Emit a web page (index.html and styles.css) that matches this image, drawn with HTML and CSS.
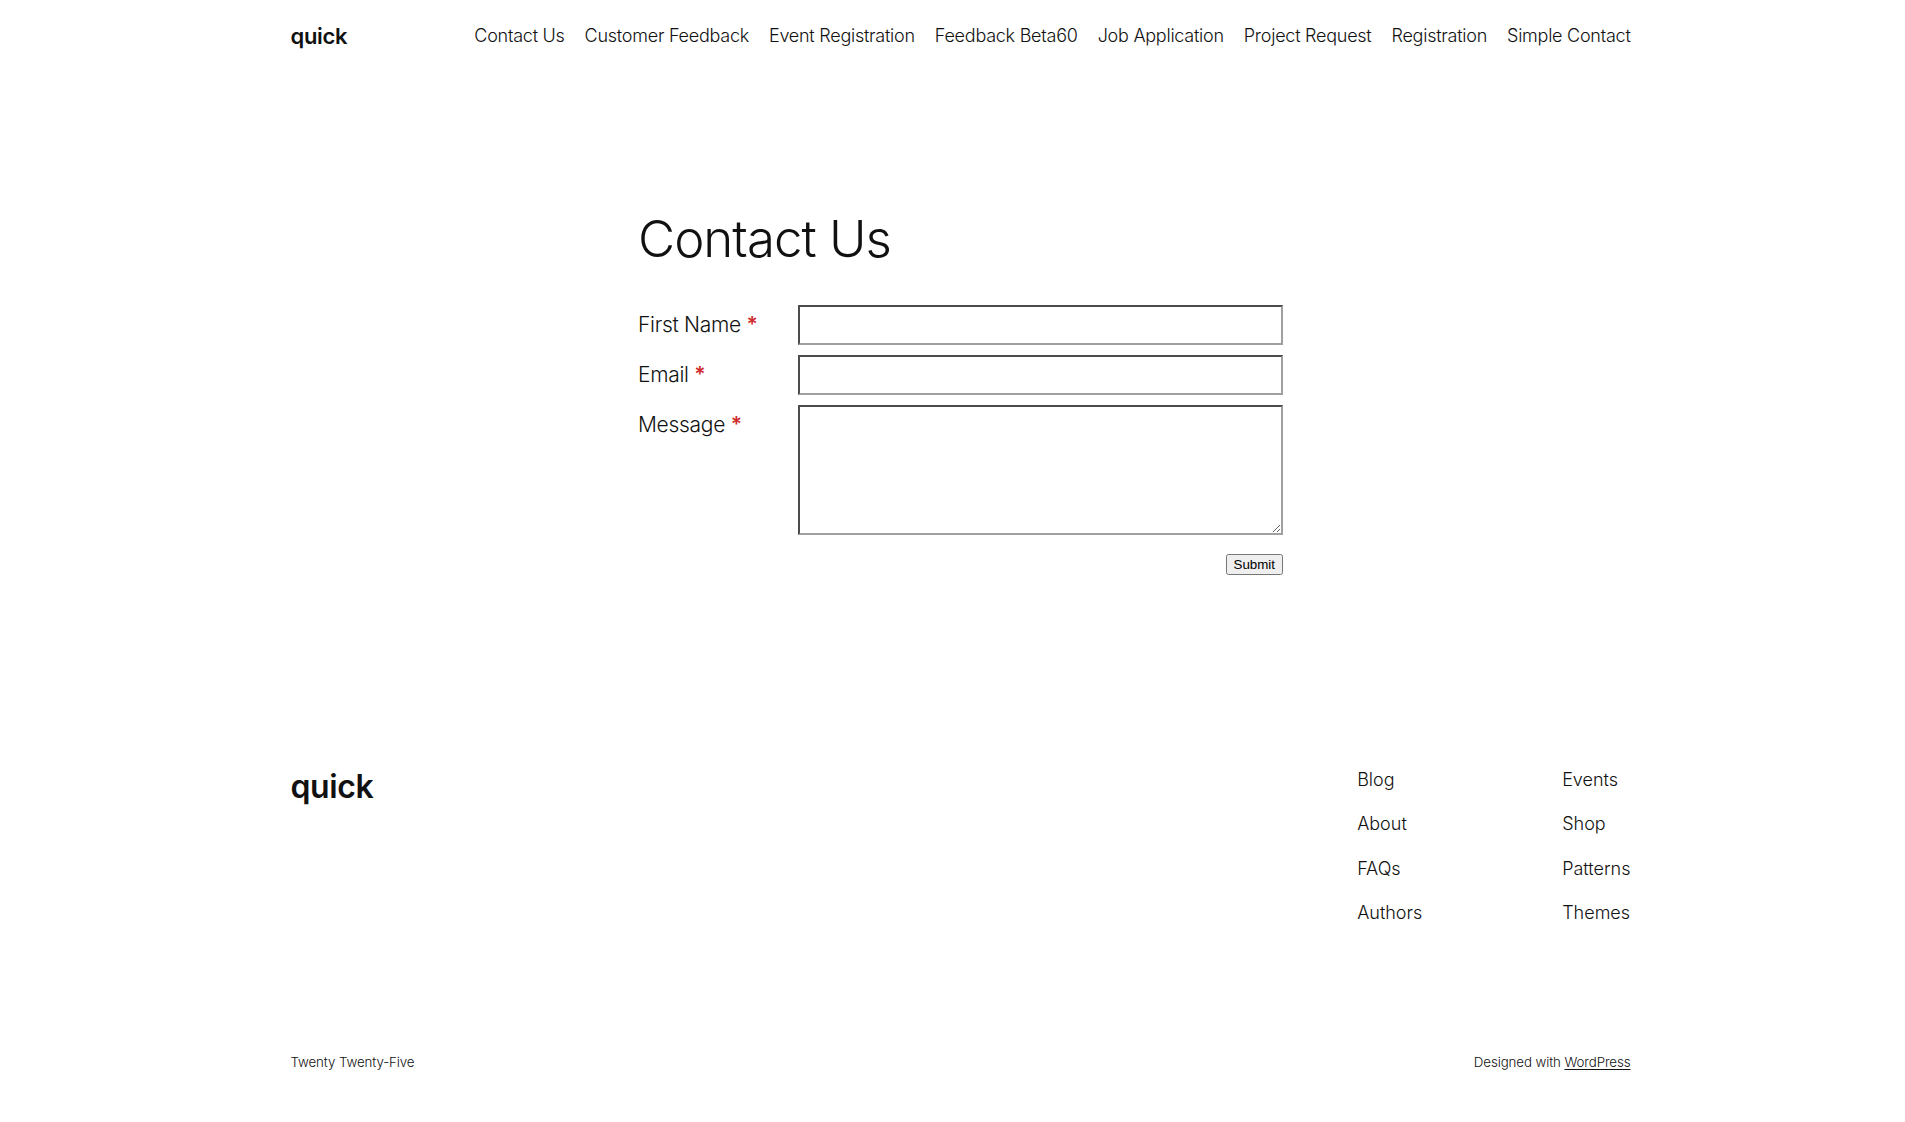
FILE: index.html
```html
<!DOCTYPE html>
<html lang="en">
<head>
    <meta charset="UTF-8">
    <meta name="viewport" content="width=device-width, initial-scale=1.0">
    <title>Contact Us &ndash; quick</title>
    <link rel="stylesheet" href="styles.css">
</head>
<body>
    <header class="site-header">
        <a class="site-title" href="#">quick</a>
        <nav class="main-nav">
            <a href="#">Contact Us</a>
            <a href="#">Customer Feedback</a>
            <a href="#">Event Registration</a>
            <a href="#">Feedback Beta60</a>
            <a href="#">Job Application</a>
            <a href="#">Project Request</a>
            <a href="#">Registration</a>
            <a href="#">Simple Contact</a>
        </nav>
    </header>

    <main class="content">
        <h1 class="page-title">Contact Us</h1>

        <form class="contact-form" onsubmit="return false">
            <label for="first-name">First Name <span class="req">*</span></label>
            <input type="text" id="first-name" required>

            <label for="email">Email <span class="req">*</span></label>
            <input type="email" id="email" required>

            <label for="message">Message <span class="req">*</span></label>
            <textarea id="message" required></textarea>

            <div class="form-actions">
                <button type="submit">Submit</button>
            </div>
        </form>
    </main>

    <footer class="site-footer">
        <div class="footer-top">
            <a class="footer-title" href="#">quick</a>
            <div class="footer-links">
                <nav class="footer-col">
                    <a href="#">Blog</a>
                    <a href="#">About</a>
                    <a href="#">FAQs</a>
                    <a href="#">Authors</a>
                </nav>
                <nav class="footer-col">
                    <a href="#">Events</a>
                    <a href="#">Shop</a>
                    <a href="#">Patterns</a>
                    <a href="#">Themes</a>
                </nav>
            </div>
        </div>
        <div class="footer-bottom">
            <span>Twenty Twenty-Five</span>
            <span>Designed with <a href="#" class="wp-link">WordPress</a></span>
        </div>
    </footer>
</body>
</html>
```

FILE: styles.css
```css
body {
    margin: 0;
    padding-left: 16px;
    background-color: #fff;
    color: #111;
    font-family: Inter, "Noto Sans", sans-serif;
    font-weight: 300;
}

a {
    color: inherit;
    text-decoration: none;
}

.site-header {
    display: flex;
    align-items: center;
    justify-content: space-between;
    max-width: 1340px;
    margin: 0 auto;
    padding: 23px 0 21px;
}

.site-title {
    font-size: 22px;
    font-weight: 600;
    letter-spacing: -0.3px;
    line-height: 26px;
}

.main-nav {
    display: flex;
    gap: 20px;
    font-size: 18px;
    line-height: 26px;
    letter-spacing: -0.25px;
}

.content {
    max-width: 645px;
    margin: 0 auto;
    padding-top: 138px;
}

.page-title {
    margin: 0 0 36px;
    font-size: 51px;
    font-weight: 300;
    line-height: 1.2;
    letter-spacing: -1px;
}

.contact-form {
    display: grid;
    grid-template-columns: 160px 1fr;
    row-gap: 10px;
}

.contact-form label {
    font-size: 21px;
    line-height: 40px;
    letter-spacing: -0.3px;
}

.req {
    color: #cf2e2e;
    font-weight: 600;
}

.contact-form input,
.contact-form textarea {
    box-sizing: border-box;
    width: 100%;
    margin: 0;
    border: 2px inset #a0a0a0;
    font: 13px Arial, sans-serif;
}

.contact-form input {
    height: 40px;
}

.contact-form textarea {
    height: 130px;
}

.form-actions {
    grid-column: 2;
    display: flex;
    justify-content: flex-end;
    padding-top: 9px;
}

.form-actions button {
    font: 13.33px Arial, sans-serif;
    padding: 1px 6px;
    height: 21px;
}

.site-footer {
    max-width: 1340px;
    margin: 0 auto;
    padding-top: 192px;
    padding-bottom: 40px;
}

.footer-top {
    display: flex;
    justify-content: space-between;
    align-items: flex-start;
}

.footer-title {
    font-size: 32px;
    font-weight: 600;
    letter-spacing: -0.4px;
    line-height: 40px;
}

.footer-links {
    display: grid;
    grid-template-columns: 205px auto;
}

.footer-col {
    display: flex;
    flex-direction: column;
    gap: 18.2px;
    font-size: 18px;
    line-height: 26px;
}

.footer-bottom {
    display: flex;
    justify-content: space-between;
    margin-top: 126px;
    font-size: 13.3px;
    line-height: 20px;
    letter-spacing: -0.1px;
}

.wp-link {
    text-decoration: underline;
    text-underline-offset: 2px;
}
```
